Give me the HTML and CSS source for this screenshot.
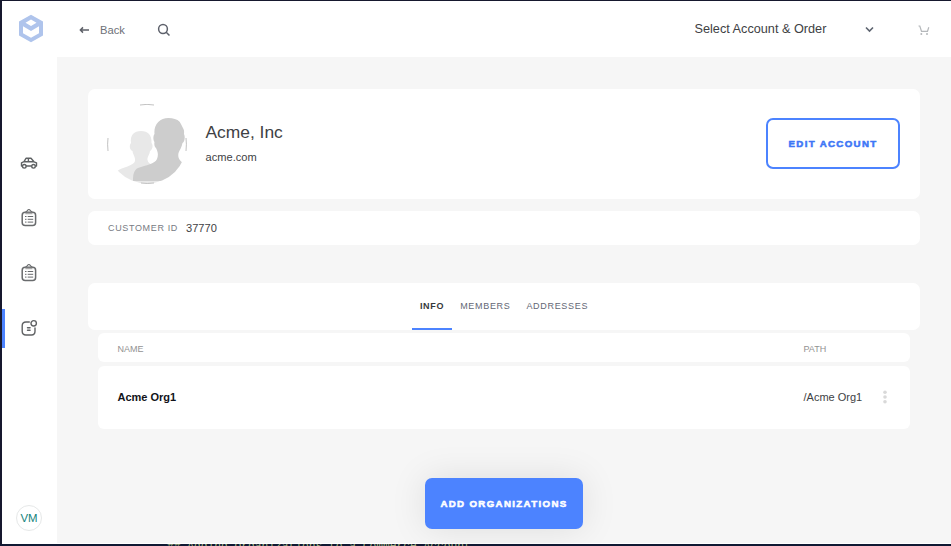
FILE: index.html
```html
<!DOCTYPE html>
<html lang="en">
<head>
<meta charset="utf-8">
<title>Acme, Inc</title>
<link rel="stylesheet" href="styles.css">
</head>
<body>
<div class="window">
  <aside class="sidebar">
    <svg class="logo" width="26" height="29" viewBox="0 0 26 29"><path fill="#afc4ec" fill-rule="evenodd" d="M13 .7 25 7.500v14L13 28.300 1 21.500V7.500ZM13 5.600 7.500 8.800 13 12l5.500-3.200ZM5 12.300v7l8 4.500 8-4.500v-7l-8 4.800Z"/></svg>
    <nav class="nav">
      <a class="nav-item"><svg width="18" height="14" viewBox="0 0 18 14"><g fill="none" stroke="#5f6264" stroke-width="1.400" stroke-linejoin="round"><path d="M2.600 10H1.500V6.800L4 5.600 6 2.300h5l3 3.500 2.500 1V10h-1.200M6 10h5.800M4 5.700h10M8.400 2.400v3.300"/><circle cx="4.300" cy="10.300" r="1.800"/><circle cx="13.500" cy="10.300" r="1.800"/></g></svg></a>
      <a class="nav-item"><svg width="18" height="20" viewBox="0 0 18 20"><use href="#clip"/></svg></a>
      <a class="nav-item"><svg width="18" height="20" viewBox="0 0 18 20"><g id="clip" fill="none" stroke="#696b6d"><rect x="2.200" y="4.200" width="13.400" height="13.400" rx="3" stroke-width="1.500"/><path d="M5.500 4.500C6 3 7.500 3.300 7.700 2.200c.4-1 2-1 2.400 0 .2 1.100 1.700.8 2.200 2.300" stroke-width="1.100"/><path d="M5.300 5.500h7.200" stroke="#aaa" stroke-width="1.500"/><path d="M5 8.500h1.500M5 11.300h1.500M5 14.100h1.500M7.700 8.500h5.500M7.700 11.300h5.500M7.700 14.100h5.500" stroke-width="1"/></g></svg></a>
      <a class="nav-item active"><svg width="18" height="18" viewBox="0 0 18 18"><g fill="none" stroke="#606264" stroke-width="1.400" stroke-linecap="round"><path d="M9.300 3H6Q2.200 3 2.200 6.800v5.500Q2.200 16 6 16h5.500q3.500 0 3.500-3.700V9"/><circle cx="13.700" cy="4.300" r="2.700"/><path d="M7.500 8.700h2.600M7.500 11.200h2.600"/></g></svg></a>
    </nav>
    <div class="user">VM</div>
  </aside>
  <div class="main">
    <header class="topbar">
      <a class="back"><svg width="11" height="8" viewBox="0 0 11 8"><path d="M10 4H1.500M4 1.400 1.400 4 4 6.600" fill="none" stroke="#5d6068" stroke-width="1.500"/></svg><span>Back</span></a>
      <svg class="search" width="14" height="14" viewBox="0 0 14 14"><g fill="none" stroke="#5d616b" stroke-width="1.500"><circle cx="6" cy="6" r="4.400"/><path d="m9.200 9.200 3.300 3.300"/></g></svg>
      <span class="select">Select Account &amp; Order</span>
      <svg class="chevron" width="9" height="7" viewBox="0 0 9 7"><path d="M1 1.500 4.500 5 8 1.500" fill="none" stroke="#5d6470" stroke-width="1.600"/></svg>
      <svg class="cart" width="12" height="12" viewBox="0 0 12 12"><path d="M.5 2h1.300l1.700 5.300h6l1.300-4" fill="none" stroke="#b5b8bb" stroke-width="1.200"/><circle cx="3.300" cy="10" r="1" fill="#b5b8bb"/><circle cx="9" cy="10" r="1" fill="#b5b8bb"/></svg>
    </header>
    <main class="content">
      <section class="card account">
        <svg class="avatar" width="80" height="80" viewBox="0 0 80 80"><clipPath id="disc"><circle cx="40" cy="40" r="39.500"/></clipPath><g clip-path="url(#disc)"><path fill="#e8e8e8" d="M10 67c5-4 17-5 18-10 .6-4-2-6-2.500-10-3-1-3.500-6-1.500-8-1-8 3-12 10-12s11 4 10.500 12c2 2 1 7-1.500 8-.5 4-3 6-2.500 9 1 5 8 6 12 8v16H15Z"/><path fill="#cdcdcd" d="M26 77c0-7 1-11 5-13 8-3 17-4 19-9 1.500-4 1-7-1-11-1.500-1-2-4-1.500-6-1.500-2-1.500-6 0-8-1-9 5-16 14-16 10 0 17 6 15.500 16 1.500 3 .5 8-1.500 9-.5 4-3 7-4 10-1 5 1 9 9 12v16Z"/></g><path d="M33 1q7-1.300 14 0M34 79q6 1 13 0M1 34q-.8 6 0 13M79 34q.8 6 0 13" fill="none" stroke="#bbb" stroke-width=".9"/></svg>
        <div class="identity"><h1>Acme, Inc</h1><p>acme.com</p></div>
        <button class="btn outline">EDIT ACCOUNT</button>
      </section>
      <section class="card customer"><span class="label">CUSTOMER ID</span><span class="value">37770</span></section>
      <nav class="card tabs"><a class="tab selected">INFO</a><a class="tab">MEMBERS</a><a class="tab">ADDRESSES</a></nav>
      <div class="table">
        <div class="row head"><span>NAME</span><span>PATH</span></div>
        <div class="row body"><strong>Acme Org1</strong><span>/Acme Org1</span><svg width="4" height="14" viewBox="0 0 4 14" fill="#d9d9d9"><circle cx="2" cy="2.300" r="1.800"/><circle cx="2" cy="7" r="1.800"/><circle cx="2" cy="11.700" r="1.800"/></svg></div>
      </div>
      <button class="btn primary">ADD ORGANIZATIONS</button>
    </main>
  </div>
</div>
<div class="desktop">## Adding Organizations to a Commerce Account</div>
</body>
</html>
```
FILE: styles.css
```css
* { box-sizing: border-box; }
body { margin: 0; height: 546px; overflow: hidden; font-family: "Liberation Sans", Arial, sans-serif; color: #3e4144; background: #16182e; }
.window { display: flex; width: 951px; height: 544px; overflow: hidden; background: #fff; border: solid #16182e; border-width: 1px 0 0 2px; }
.desktop { height: 2px; overflow: hidden; background: #101933; color: #a9b886; padding-left: 167px; font: 11.250px/5px "Liberation Mono", monospace; white-space: pre; }
.sidebar { width: 55px; display: flex; flex-direction: column; flex: none; background: #fff; }
.logo { margin: 13px 0 0 16px; flex: none; }
.nav { margin-top: 100px; }
.nav-item { height: 39px; margin-bottom: 16.300px; display: flex; align-items: center; padding-left: 18px; }
.nav-item.active { border-left: 3px solid #4c83ff; padding-left: 15px; margin-bottom: 0; }
.user { width: 26px; height: 26px; margin: auto 0 13px 14px; border: 1px solid #e6e8e8; border-radius: 50%; color: #12827c; font-size: 11.400px; line-height: 24px; text-align: center; }
.main { flex: 1; display: flex; flex-direction: column; }
.topbar { height: 56px; display: flex; align-items: center; padding: 1px 21px 0 22px; flex: none; }
.back { display: flex; align-items: center; width: 78px; gap: 10px; font-size: 11.200px; color: #6e7178; }
.select { margin-left: auto; width: 170.500px; font-size: 12.700px; line-height: 15px; }
.cart { margin-left: 44px; }
.content { flex: 1; background: #f6f6f6; padding: 31.500px 31px 0; margin-bottom: 1px; }
.card { background: #fff; border-radius: 7px; }
.account { height: 110px; display: flex; align-items: center; padding: 0 20px 0 19px; }
.identity { margin: 0 0 2px 18.500px; }
.identity h1 { margin: 0; font-size: 17.400px; line-height: 20px; font-weight: 400; }
.identity p { margin: 9px 0 0; font-size: 11.100px; line-height: 13px; }
.btn { font-family: "Liberation Sans", Arial, sans-serif; font-weight: 700; font-size: 9.700px; letter-spacing: 1.350px; -webkit-text-stroke: .55px currentColor; border-radius: 7px; padding: 0; white-space: nowrap; }
.outline { width: 134px; height: 51px; margin-left: auto; background: #fff; border: 2px solid #4c83ff; color: #3d76f6; }
.customer { margin-top: 12.500px; height: 33.500px; display: flex; align-items: center; padding-left: 20px; }
.label { font-size: 9px; letter-spacing: .65px; color: #777b83; width: 78px; }
.value { font-size: 11.100px; }
.tabs { margin-top: 38px; height: 47.500px; display: flex; justify-content: center; }
.tab { font-size: 9px; line-height: 47px; letter-spacing: .68px; padding: 0 8px; color: #636775; }
.selected { font-weight: 700; color: #36393c; border-bottom: 2px solid #4c83ff; }
.table { margin: 3px 10px 0; }
.row { display: grid; grid-template-columns: 686px 79px auto; justify-content: start; align-items: center; padding-left: 19.500px; background: #fff; border-radius: 6px; }
.head { height: 28.500px; padding-top: 3px; font-size: 9px; color: #929292; }
.body { height: 63.500px; margin-top: 4px; font-size: 11px; }
.body strong { color: #111319; }
.primary { display: block; width: 158px; height: 51px; margin: 49.200px auto 0; border: 0; background: #4c83ff; color: #fff; box-shadow: 0 0 36px rgba(0,0,0,.1); }
```
